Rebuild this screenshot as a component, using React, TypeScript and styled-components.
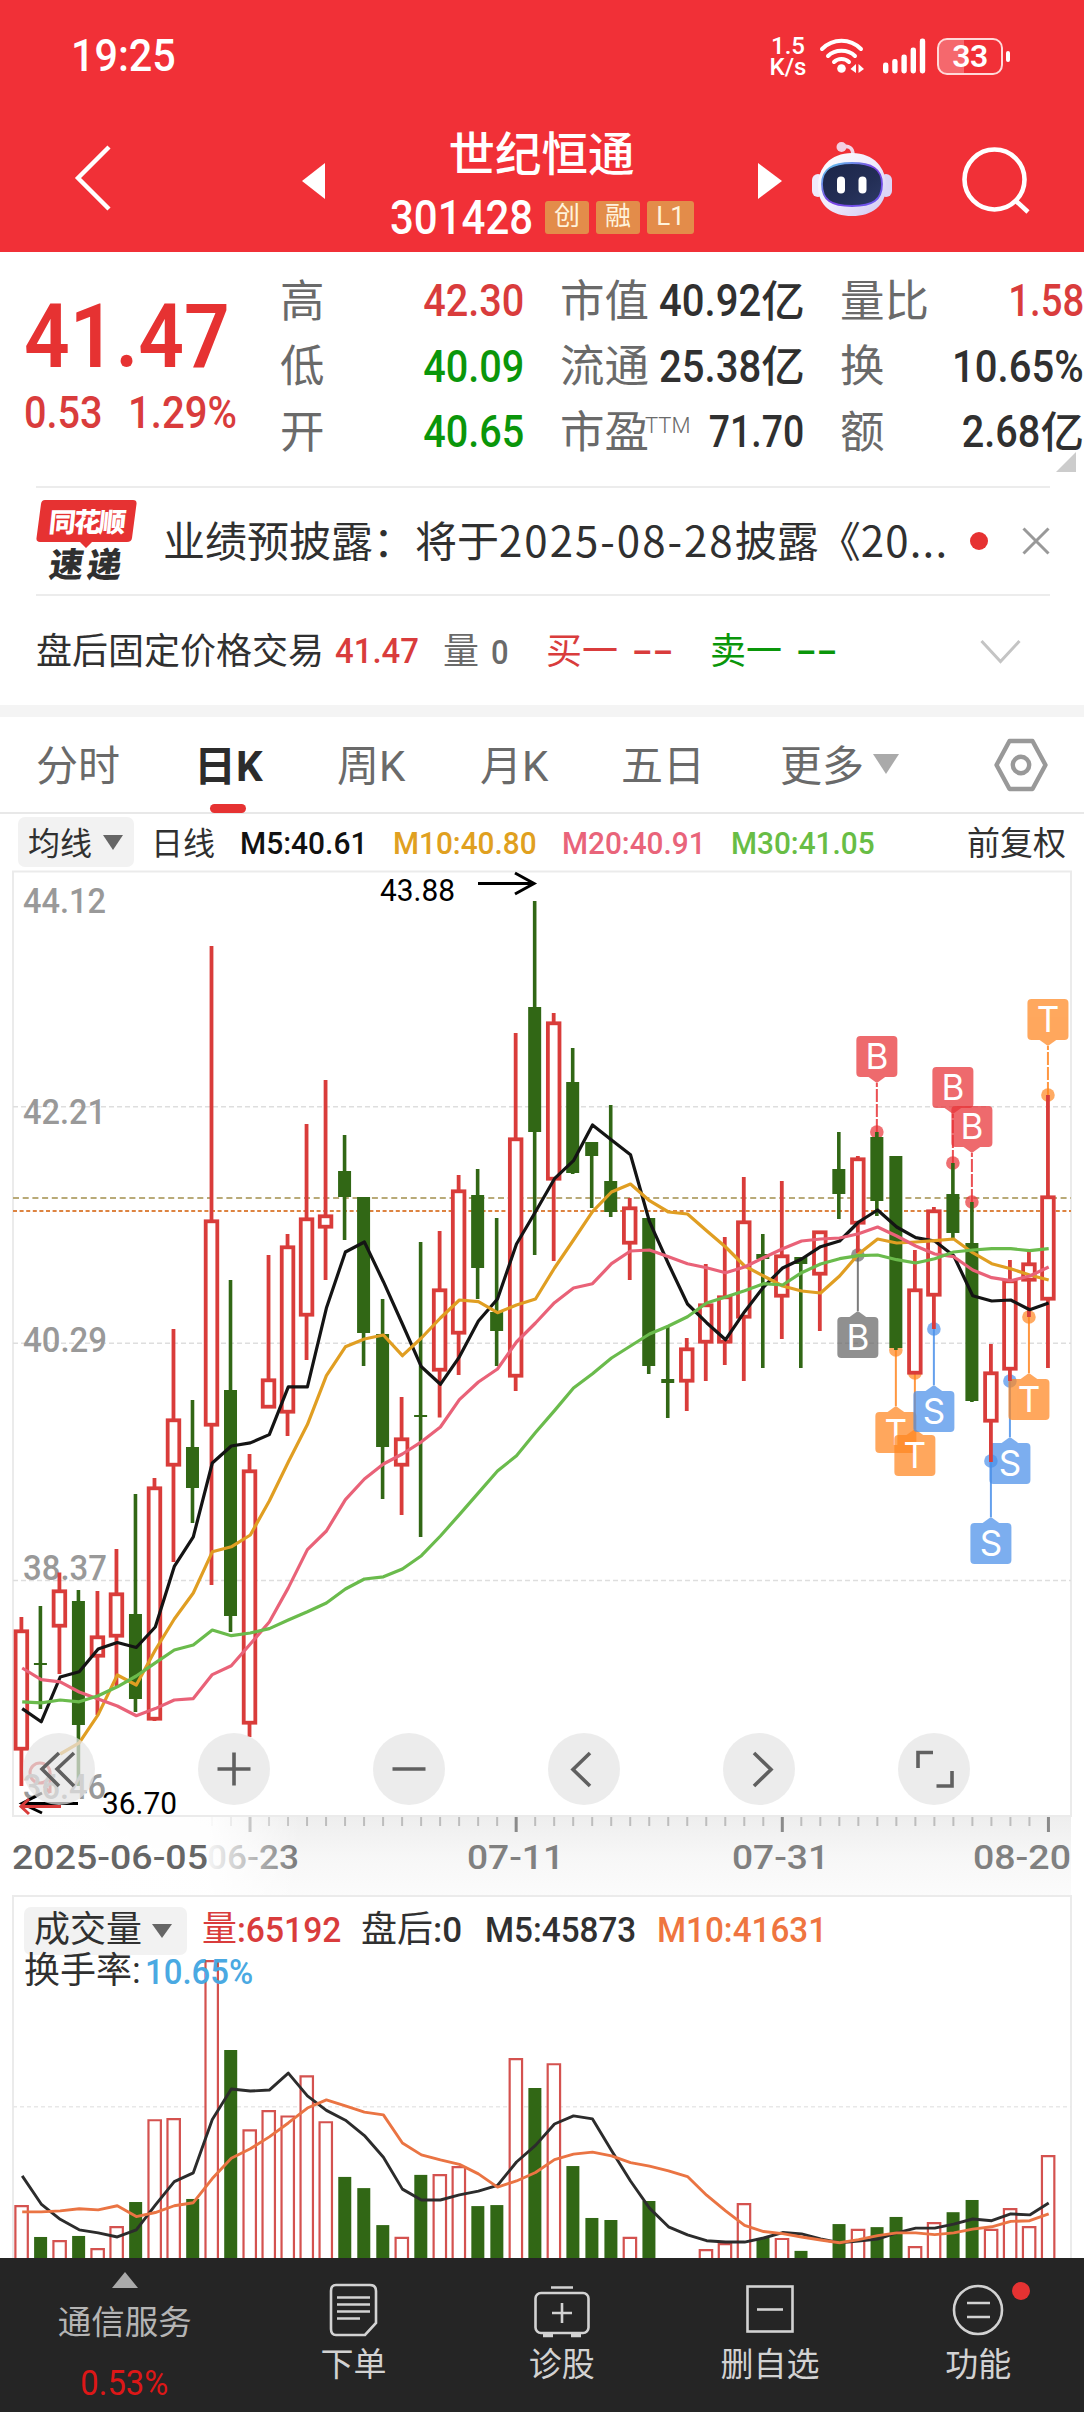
import React from "react";
import styled, { createGlobalStyle } from "styled-components";

const RED = "#e63232";
const GREEN = "#0a960a";
const INK = "#303030";
const GREY = "#6a6a6a";

const Global = createGlobalStyle`
  * { box-sizing: border-box; }
  html, body { margin: 0; padding: 0; background: #fff; }
  body {
    width: 1084px;
    font-family: Roboto, "Noto Sans CJK SC", sans-serif;
    color: ${INK};
    overflow: hidden;
  }
  svg { display: block; flex: none; overflow: visible; }
`;

const Page = styled.main`
  width: 1084px;
  height: 2412px;
  display: flex;
  flex-direction: column;
  overflow: hidden;
  background: #fff;
`;

/* Condensed numerals */
const Num = styled.span<{ $s: number; $x?: number; $c?: string; $w?: number; $o?: string }>`
  display: inline-block;
  flex: none;
  white-space: nowrap;
  font-size: ${(p) => p.$s}px;
  font-weight: ${(p) => p.$w ?? 500};
  color: ${(p) => p.$c ?? "inherit"};
  transform: scaleX(${(p) => p.$x ?? 0.91});
  transform-origin: ${(p) => p.$o ?? "left"} center;
`;

/* ---------- header ---------- */
const Header = styled.header`
  height: 252px;
  flex: none;
  background: #f13037;
  color: #fff;
`;
const StatusBar = styled.div`
  height: 112px;
  padding: 1px 74px 0 71px;
  display: flex;
  align-items: center;
  justify-content: space-between;
`;
const StatusIcons = styled.div`
  display: flex;
  align-items: center;
  margin-top: -1px;
`;
const Speed = styled.div`
  width: 48px;
  padding-top: 2px;
  font-size: 24px;
  line-height: 21px;
  font-weight: 500;
  text-align: center;
  white-space: pre;
  margin-right: 7px;
`;
const Battery = styled.div`
  width: 66px;
  height: 37px;
  border: 2.5px solid #ffd9d9;
  border-radius: 10px;
  margin-left: 11px;
  display: flex;
  align-items: center;
  justify-content: center;
  font-size: 32px;
  font-weight: 600;
  letter-spacing: -0.5px;
  background: linear-gradient(90deg, #f5686d 0 40%, transparent 40%);
`;
const BatteryNub = styled.div`
  width: 4px;
  height: 11px;
  margin-left: 3px;
  border-radius: 2px;
  background: #fff;
`;
const NavBar = styled.div`
  height: 140px;
  display: flex;
  align-items: flex-start;
`;
const NavSlot = styled.div<{ $l: number; $t: number }>`
  margin: ${(p) => p.$t}px 0 0 ${(p) => p.$l}px;
`;
const TitleBlock = styled.div`
  width: 433px;
  padding-top: 20px;
  display: flex;
  flex-direction: column;
  align-items: center;
`;
const StockName = styled.h1`
  margin: 0 2px 0 0;
  height: 50px;
  line-height: 46px;
  font-size: 46.5px;
  font-weight: 500;
`;
const CodeRow = styled.div`
  height: 34px;
  margin: 18px 1px 0 0;
  display: flex;
  align-items: center;
  gap: 7px;
`;
const CodeCell = styled.div`
  width: 148px;
  height: 34px;
  display: flex;
  align-items: center;
  line-height: 34px;
  padding-top: 2px;
`;
const Tag = styled.span<{ $w?: number }>`
  width: ${(p) => p.$w ?? 44}px;
  height: 33px;
  line-height: 31px;
  border-radius: 3px;
  background: #e38c4a;
  color: #fff3dc;
  text-align: center;
  font-size: 26px;
`;

/* ---------- quote ---------- */
const Quote = styled.section`
  height: 234px;
  flex: none;
  padding-top: 17px;
  display: flex;
  position: relative;
`;
const PriceCol = styled.div`
  width: 280px;
  padding-left: 24px;
`;
const Price = styled.div`
  height: 107px;
  padding-top: 15px;
  line-height: 106px;
`;
const Change = styled.div`
  display: flex;
  height: 74px;
  line-height: 75px;
  & > div { width: 104px; }
`;
const Stats = styled.div`
  display: grid;
  grid-template-columns: repeat(3, 244px);
  grid-auto-rows: 65.5px;
  column-gap: 36px;
`;
const Stat = styled.div`
  display: flex;
  align-items: center;
  line-height: 65px;
  font-size: 44px;
`;
const StatLabel = styled.span`
  flex: none;
  white-space: nowrap;
  display: flex;
  color: ${GREY};
  font-size: 44.5px;
  padding-top: 1px;
`;
const Sup = styled.span`
  font-size: 22px;
  line-height: 49px;
  font-weight: 300;
  margin-left: -4px;
`;
const StatValue = styled.span<{ $c?: string }>`
  margin-left: auto;
  color: ${(p) => p.$c ?? INK};
  display: flex;
  align-items: center;
`;
const Unit = styled.span`
  font-size: 43.5px;
  font-weight: 500;
  padding-top: 1px;
`;
const Corner = styled.i`
  position: absolute;
  right: 8px;
  bottom: 14px;
  border-bottom: 20px solid #ccc;
  border-left: 20px solid transparent;
`;

/* ---------- notice ---------- */
const Notice = styled.section`
  height: 110px;
  flex: none;
  margin: 0 34px 0 36px;
  border-top: 2px solid #ececec;
  border-bottom: 2px solid #ececec;
  display: flex;
  align-items: center;
`;
const Logo = styled.div`
  width: 101px;
  height: 82px;
`;
const NoticeText = styled.div`
  width: 791px;
  margin: -5px 0 0 26px;
  font-family: "Noto Sans CJK SC", sans-serif;
  font-size: 42px;
  line-height: 60px;
  white-space: nowrap;
`;
const Spaced = styled.span<{ $ls: number }>`
  letter-spacing: ${(p) => p.$ls}px;
`;
const Dot = styled.i`
  width: 18px;
  height: 18px;
  border-radius: 50%;
  background: ${RED};
  margin: 0 auto 0 16px;
`;

/* ---------- after hours ---------- */
const After = styled.section`
  height: 109px;
  flex: none;
  display: grid;
  grid-template-columns: 299px 108px 48px 55px 86px 78px 86px 184px 1fr;
  padding: 3px 0 0 36px;
  align-items: center;
  font-size: 36px;
  line-height: 40px;
  white-space: nowrap;
`;
const AfterText = styled.span<{ $c?: string }>`
  color: ${(p) => p.$c ?? INK};
  margin-top: -1px;
`;

/* ---------- tabs ---------- */
const Tabs = styled.nav`
  height: 109px;
  flex: none;
  border-top: 12px solid #f4f4f4;
  border-bottom: 2px solid #e8e8e8;
  padding-left: 36px;
  display: grid;
  grid-template-columns: 158px 143px 143px 141px 159px 214px 1fr;
  align-items: center;
`;
const Tab = styled.div<{ $on?: boolean }>`
  position: relative;
  display: flex;
  align-items: center;
  height: 95px;
  padding-bottom: 5px;
  font-size: 42px;
  color: ${(p) => (p.$on ? "#2c2c2c" : GREY)};
  font-weight: ${(p) => (p.$on ? 700 : 400)};
  &::after {
    content: "";
    display: ${(p) => (p.$on ? "block" : "none")};
    position: absolute;
    left: 16px;
    bottom: -1px;
    width: 36px;
    height: 9px;
    border-radius: 5px;
    background: ${RED};
  }
`;
const Caret = styled.i<{ $w: number; $h: number; $c: string; $l: number; $up?: boolean; $t?: number }>`
  width: 0;
  height: 0;
  margin-left: ${(p) => p.$l}px;
  margin-top: ${(p) => p.$t ?? 0}px;
  border-left: ${(p) => p.$w / 2}px solid transparent;
  border-right: ${(p) => p.$w / 2}px solid transparent;
  ${(p) => (p.$up ? "border-bottom" : "border-top")}: ${(p) => p.$h}px solid ${(p) => p.$c};
`;

/* ---------- indicators ---------- */
const MaRow = styled.div`
  height: 56px;
  flex: none;
  padding-left: 18px;
  display: grid;
  grid-template-columns: 133px 89px 153px 169px 169px 236px 1fr;
  align-items: center;
  white-space: nowrap;
`;
const MaNum = styled(Num)`
  margin-top: 2px;
`;
const Picker = styled.div<{ $w: number; $h: number }>`
  width: ${(p) => p.$w}px;
  height: ${(p) => p.$h}px;
  border-radius: 7px;
  background: #f2f2f2;
  padding-left: 10px;
  display: flex;
  align-items: center;
`;
const Zh = styled.span<{ $s: number; $c?: string; $t?: number }>`
  font-size: ${(p) => p.$s}px;
  color: ${(p) => p.$c ?? INK};
  margin-top: ${(p) => p.$t ?? -3}px;
  white-space: nowrap;
`;

/* ---------- charts ---------- */
const ChartBox = styled.section`
  position: relative;
  height: 947px;
  flex: none;
`;
const Tools = styled.div`
  position: absolute;
  left: 23px;
  bottom: 12px;
  display: flex;
  gap: 103px;
`;
const Tool = styled.button`
  width: 72px;
  height: 72px;
  padding: 0;
  border: 0;
  border-radius: 50%;
  background: rgba(229, 229, 229, 0.72);
  display: flex;
  align-items: center;
  justify-content: center;
`;
const Axis = styled.div`
  height: 78px;
  flex: none;
`;
const VolumeBox = styled.section`
  position: relative;
  height: 363px;
  flex: none;
`;
const VolLegend = styled.div`
  position: absolute;
  left: 24px;
  top: 12px;
`;
const VolRow = styled.div<{ $cols: string; $h: number }>`
  display: grid;
  grid-template-columns: ${(p) => p.$cols};
  height: ${(p) => p.$h}px;
  align-items: center;
  white-space: nowrap;
  line-height: ${(p) => p.$h}px;
`;
const Pair = styled.div`
  display: flex;
  align-items: center;
`;

/* ---------- bottom bar ---------- */
const Bottom = styled.footer`
  height: 154px;
  flex: none;
  background: #252525;
  color: #d2d2d2;
  display: grid;
  grid-template-columns: 249.5px repeat(4, 208.2px);
`;
const Sector = styled.div`
  display: flex;
  flex-direction: column;
  align-items: center;
  padding-top: 14px;
  font-size: 33.5px;
  line-height: 40px;
  color: #b4b4b4;
`;
const SectorName = styled.div`
  margin-top: 15px;
  height: 46px;
`;
const SectorPct = styled.div`
  margin-top: 14px;
`;
const Action = styled.div`
  position: relative;
  display: flex;
  flex-direction: column;
  align-items: center;
  padding-top: 22px;
  font-size: 33px;
  line-height: 40px;
`;
const ActionLabel = styled.div`
  margin-top: 5px;
`;
const Badge = styled.i`
  position: absolute;
  left: 138px;
  top: 24px;
  width: 18px;
  height: 18px;
  border-radius: 50%;
  background: ${RED};
`;

/* ---------- data ---------- */
const X0 = 21.4;
const STEP = 19.01;
const cx = (i: number) => X0 + STEP * i;

type Candle = [up: 0 | 1, high: number, top: number, bottom: number, low: number];
const candles: Candle[] = [
  [1, 1617, 1631, 1749, 1786], [0, 1606, 1663, 1665, 1709], [1, 1572.5, 1591, 1626, 1674],
  [0, 1590, 1601, 1725, 1786], [1, 1591, 1637, 1656, 1715], [1, 1549, 1594, 1636, 1686],
  [0, 1494, 1614, 1699, 1712], [1, 1478, 1488, 1719, 1721], [1, 1329, 1420, 1465, 1562],
  [0, 1400, 1447, 1488, 1523], [1, 946, 1221, 1425, 1585], [0, 1280, 1390, 1616, 1632],
  [1, 1454, 1471, 1723, 1737], [1, 1255, 1380, 1407, 1407], [1, 1234, 1247, 1412, 1436],
  [1, 1124, 1219, 1315, 1360], [1, 1080, 1216, 1227, 1280], [0, 1135, 1171, 1197, 1240],
  [0, 1197, 1197, 1333, 1366], [0, 1299, 1334, 1447, 1499], [1, 1397, 1439, 1465, 1515],
  [0, 1242, 1415, 1417, 1537], [1, 1231, 1290, 1370, 1417.5], [1, 1175, 1191, 1333, 1375],
  [0, 1169, 1195, 1268, 1299], [0, 1218, 1312, 1331, 1366], [1, 1033, 1139, 1376, 1391],
  [0, 901, 1007, 1132, 1255], [1, 1013, 1023, 1179, 1261], [0, 1048, 1082, 1173, 1174],
  [0, 1142, 1142, 1156, 1208], [0, 1105, 1181, 1212, 1217], [1, 1198, 1208, 1243, 1280],
  [0, 1218, 1218, 1366, 1374], [0, 1326, 1379, 1383, 1418], [1, 1338, 1349, 1381, 1411],
  [1, 1264, 1305, 1342, 1381], [1, 1237, 1297, 1342, 1365], [1, 1177, 1222, 1317, 1381],
  [0, 1234, 1254, 1259, 1368], [1, 1181, 1256, 1296, 1339], [0, 1257, 1257, 1264, 1368],
  [1, 1232, 1232, 1274, 1331], [0, 1132, 1169, 1194, 1219], [1, 1156, 1159, 1223, 1253],
  [0, 1132, 1137, 1201, 1216], [0, 1156, 1156, 1348, 1350], [1, 1250, 1290, 1373, 1373],
  [1, 1207, 1211, 1295, 1329], [0, 1163, 1194, 1233, 1238], [0, 1202, 1243, 1401, 1402],
  [1, 1344, 1373, 1421, 1462], [1, 1260, 1281, 1369, 1381], [1, 1250, 1264, 1280, 1317],
  [1, 1095, 1197, 1299, 1368],
];

const ma5 = [1708.6, 1721.8, 1677, 1671.8, 1649, 1642.5, 1647.5, 1627, 1566.4, 1536.8, 1463, 1446, 1442.9, 1434.6, 1386.8, 1386.8, 1308, 1252, 1242, 1281.7, 1324, 1366.8, 1384.3, 1356.8, 1321, 1299, 1244, 1211.7, 1178.7, 1160.7, 1125, 1140, 1154.7, 1221.7, 1264, 1304, 1322.7, 1339.7, 1311.7, 1287, 1268, 1259, 1246.7, 1241, 1222, 1210, 1227, 1237.7, 1241, 1255.7, 1295.7, 1301, 1300, 1309.7, 1303];
const ma10 = [1754, 1742.9, 1714.6, 1675, 1685, 1650, 1619, 1593, 1551.8, 1546.8, 1535, 1501, 1462, 1424.6, 1375.7, 1346.8, 1339, 1335, 1355.7, 1338, 1318, 1300, 1301.7, 1312.7, 1305, 1299, 1268, 1240, 1211.7, 1192, 1184, 1200.7, 1212, 1214, 1230.7, 1247, 1266, 1276, 1286, 1291, 1293, 1276, 1254, 1239, 1243, 1242, 1240.7, 1239, 1252.7, 1263.7, 1268.7, 1275, 1280];
const ma20 = [1668, 1679.6, 1681.8, 1692, 1699, 1706, 1715.7, 1708.6, 1700, 1698.6, 1674.6, 1665.7, 1644, 1622, 1587.9, 1549.6, 1531, 1499.6, 1479, 1464, 1454, 1441.8, 1427, 1399.6, 1382, 1369, 1342, 1323, 1302.7, 1288, 1283.7, 1263.7, 1251, 1250, 1256.7, 1263.7, 1267.7, 1272.7, 1267, 1257.7, 1248.7, 1241, 1239, 1238, 1233.7, 1227, 1236, 1246, 1254, 1256.7, 1270, 1277.7, 1280.7, 1276, 1267];
const ma30 = [1701.8, 1702.9, 1700, 1701.8, 1695.7, 1686.8, 1676, 1662.9, 1650, 1645, 1630, 1635.7, 1633, 1628.6, 1620, 1611.8, 1603, 1589, 1579, 1576.8, 1569, 1555.7, 1536, 1514.6, 1492.9, 1471, 1455.7, 1432.5, 1410.6, 1388, 1373.7, 1358, 1346, 1334, 1326, 1316.7, 1303, 1297, 1290.7, 1283.7, 1285, 1272.7, 1264, 1258.7, 1255.7, 1255, 1259.7, 1263, 1258.7, 1252, 1250, 1248.7, 1248.7, 1250.7, 1248.7];

const path = (ys: number[], from = 0) => ys.map((y, k) => `${(cx(k + from) + 0.8).toFixed(1)},${y}`).join(" ");

type Mark = { i: number; y: number; t: string; c: string; up?: boolean };
const marks: Mark[] = [
  { i: 45, y: 1132, t: "B", c: "#e83236", up: true },
  { i: 49, y: 1163, t: "B", c: "#e83236", up: true },
  { i: 50, y: 1202, t: "B", c: "#e83236", up: true },
  { i: 54, y: 1095, t: "T", c: "#ff8620", up: true },
  { i: 44, y: 1255, t: "B", c: "#666666" },
  { i: 46, y: 1350, t: "T", c: "#ff8620" },
  { i: 47, y: 1373, t: "T", c: "#ff8620" },
  { i: 48, y: 1329, t: "S", c: "#4a90ea" },
  { i: 51, y: 1461, t: "S", c: "#4a90ea" },
  { i: 52, y: 1381, t: "S", c: "#4a90ea" },
  { i: 53, y: 1317, t: "T", c: "#ff8620" },
];

const volTops = [958, 1052, 1061, 1049, 1085, 1020, 949, 705, 702, 940, 236, 501, 735, 678, 694, 576, 711, 875, 908, 1017, 1052, 869, 867, 843, 961, 958, 525, 613, 540, 843, 996, 1002, 1052, 946, 0, 0, 1088, 1070, 952, 1055, 1055, 1093, 0, 1014, 1028, 1023, 993, 1079, 1008, 979, 943, 1028, 967, 1020, 811];
const volMa5 = [872, 955, 1000, 1031, 1040, 1052, 1031, 958, 889, 863, 706, 616, 622, 619, 569, 636, 679, 708, 753, 817, 911, 943, 943, 928, 917, 900, 831, 782, 719, 695, 704, 797, 887, 967, 1022, 1046, 1063, 1067, 1067, 1055, 1039, 1043, 1058, 1069, 1064, 1058, 1040, 1026, 1026, 1014, 999, 1004, 984, 987, 952];
const volMa10 = [978, 978, 975, 969, 972, 960, 992, 980, 960, 951, 880, 820, 792, 757, 716, 672, 648, 666, 684, 692, 775, 810, 825, 838, 866, 905, 887, 862, 824, 808, 802, 813, 833, 843, 857, 874, 929, 975, 1018, 1036, 1042, 1052, 1061, 1069, 1060, 1048, 1040, 1040, 1045, 1040, 1029, 1022, 1006, 1004, 984];
const vy = (v: number) => 1880 + v / 2.947;

const UP = "#d93c3a";
const DOWN = "#316715";

const Fit = ({ x, w, y, s, c, wt = 500, children }: { x: number; w: number; y: number; s: number; c: string; wt?: number; children: string }) => (
  <text x={x} y={y} fontSize={s} fill={c} fontWeight={wt} fontFamily="Roboto, sans-serif" textLength={w} lengthAdjust="spacingAndGlyphs">
    {children}
  </text>
);

const CandleShape = ({ i, d }: { i: number; d: Candle }) => {
  const [up, h, t, b, l] = d;
  const x = cx(i);
  if (!up)
    return (
      <g fill={DOWN}>
        <rect x={x - 1.8} y={h} width={3.6} height={l - h} />
        <rect x={x - 6.5} y={t} width={13} height={b - t} />
      </g>
    );
  return (
    <g>
      <rect x={x - 1.9} y={h} width={3.8} height={Math.max(0, t - h)} fill={UP} />
      <rect x={x - 1.9} y={b} width={3.8} height={Math.max(0, l - b)} fill={UP} />
      <rect x={x - 5.8} y={t + 0.3} width={11.6} height={b - t - 0.6} fill="#fff" stroke={UP} strokeWidth={3.8} />
    </g>
  );
};

const MarkShape = ({ m }: { m: Mark }) => {
  const x = cx(m.i);
  const top = m.up ? m.y - 96 : m.y + 62;
  const tip = m.up ? m.y - 49 : m.y + 56;
  const base = m.up ? tip - 6.5 : tip + 6.5;
  return (
    <g>
      <line x1={x} x2={x} y1={m.y} y2={tip} stroke={m.c} strokeWidth={2} opacity={0.85} strokeDasharray={m.up ? "13 2" : undefined} />
      <circle cx={x} cy={m.y} r={6.8} fill={m.c} opacity={0.7} />
      <g fill={m.c} opacity={0.72}>
        <rect x={x - 20.5} y={top} width={41} height={41} rx={4} />
        <path d={`M${x - 9} ${base}L${x} ${tip}L${x + 9} ${base}Z`} />
      </g>
      <text x={x} y={top + 33} textAnchor="middle" fontSize={35} fill="#fff" fontFamily="Inter, sans-serif">
        {m.t}
      </text>
    </g>
  );
};

const PriceChart = () => (
  <svg width={1084} height={947} viewBox="0 870 1084 947">
    <path d="M13 1816V871.5H1071V1816Z" fill="none" stroke="#ebebeb" strokeWidth={2} />
    {[1106.7, 1343.3, 1580.5].map((y) => (
      <line key={y} x1={13} x2={1071} y1={y} y2={y} stroke="#dedede" strokeWidth={1.4} strokeDasharray="5 3" />
    ))}
    <line x1={13} x2={1071} y1={1198} y2={1198} stroke="#b9aa78" strokeWidth={2} strokeDasharray="6 3.7" />
    <line x1={13} x2={1071} y1={1211} y2={1211} stroke="#dd8340" strokeWidth={2} strokeDasharray="4 2.6" />
    <Fit x={23} w={83} y={913} s={35} c="#999">44.12</Fit>
    <Fit x={23} w={83} y={1124} s={35} c="#999">42.21</Fit>
    <Fit x={23} w={84} y={1352} s={35} c="#999">40.29</Fit>
    <Fit x={23} w={84} y={1580} s={35} c="#999">38.37</Fit>
    {marks.map((m) => (
      <MarkShape key={m.i} m={m} />
    ))}
    {candles.map((d, i) => (
      <CandleShape key={i} i={i} d={d} />
    ))}
    <g fill="none" strokeWidth={3.2} strokeLinejoin="round">
      <polyline points={path(ma5)} stroke="#141414" />
      <polyline points={path(ma10, 2)} stroke="#e09e22" />
      <polyline points={path(ma20)} stroke="#e96278" />
      <polyline points={path(ma30)} stroke="#6abb4c" />
    </g>
    <Fit x={380} w={75} y={901} s={31} c="#000" wt={400}>43.88</Fit>
    <path d="M478 883.5H534M515 873L534 883.5L515 894" fill="none" stroke="#000" strokeWidth={3} />
    <circle cx={40} cy={1773} r={10} fill="none" stroke={UP} strokeWidth={3} />
    <path d="M50 1773V1793M44 1786L50 1793" fill="none" stroke={UP} strokeWidth={3} />
    <Fit x={23} w={83} y={1798.5} s={35} c="#999">36.46</Fit>
    <path d="M78 1803.5H22M42 1793L22 1803.5L42 1813" fill="none" stroke="#000" strokeWidth={3} />
    <path d="M61 1806.5H21M29 1799L21 1806.5L29 1814" fill="none" stroke={UP} strokeWidth={3} />
    <Fit x={102} w={75} y={1813.5} s={31} c="#000" wt={400}>36.70</Fit>
  </svg>
);

const DateAxis = () => (
  <svg width={1084} height={78} viewBox="0 1817 1084 78">
    <defs>
      <linearGradient id="axis" x1="0" x2="0" y1="0" y2="1">
        <stop offset="0" stopColor="#eeeeee" />
        <stop offset="0.5" stopColor="#f7f7f7" />
        <stop offset="1" stopColor="#fbfbfb" />
      </linearGradient>
      <linearGradient id="fade" gradientUnits="userSpaceOnUse" x1="13" x2="300" y1="0" y2="0">
        <stop offset="0" stopColor="#fff" />
        <stop offset="0.68" stopColor="#fff" stopOpacity="0.93" />
        <stop offset="0.8" stopColor="#fff" stopOpacity="0.6" />
        <stop offset="1" stopColor="#fff" stopOpacity="0" />
      </linearGradient>
    </defs>
    <rect x={13} y={1817} width={1058} height={78} fill="url(#axis)" />
    {Array.from({ length: 45 }, (_, k) => k + 10).map((i) => {
      const major = (i - 12) % 14 === 0;
      return (
        <rect key={i} x={cx(i) - (major ? 1.5 : 1) + 0.5} y={1817} width={major ? 3 : 2} height={major ? 15 : 9} fill={major ? "#8a8a8a" : "#bdbdbd"} />
      );
    })}
    <Fit x={207} w={92} y={1869} s={34} c="#777">06-23</Fit>
    <rect x={13} y={1817} width={287} height={78} fill="url(#fade)" />
    <Fit x={12} w={196} y={1869} s={34} c="#666">2025-06-05</Fit>
    <Fit x={467} w={97} y={1869} s={34} c="#808080">07-11</Fit>
    <Fit x={732} w={97} y={1869} s={34} c="#808080">07-31</Fit>
    <Fit x={973} w={98} y={1869} s={34} c="#808080">08-20</Fit>
  </svg>
);

const VolumeChart = () => (
  <svg width={1084} height={363} viewBox="0 1895 1084 363">
    <path d="M13 2258V1896H1071V2258" fill="none" stroke="#ebebeb" strokeWidth={2} />
    <line x1={13} x2={1071} y1={2106.7} y2={2106.7} stroke="#e8e8e8" strokeWidth={1.5} strokeDasharray="4 3" />
    {volTops.map((v, i) => {
      if (!v) return null;
      const y = vy(v);
      return candles[i][0] ? (
        <path key={i} d={`M${cx(i) - 6} 2258V${y + 1}h12.4V2258`} fill="#fff" stroke="#d4524f" strokeWidth={2.2} />
      ) : (
        <rect key={i} x={cx(i) - 6.3} y={y} width={13} height={2258 - y} fill={DOWN} />
      );
    })}
    <g fill="none" strokeWidth={2.9} strokeLinejoin="round">
      <polyline points={path(volMa5.map(vy))} stroke="#2c2c2c" />
      <polyline points={path(volMa10.map(vy))} stroke="#ea7443" />
    </g>
  </svg>
);

const Wifi = () => (
  <svg width={46} height={36} viewBox="0 0 46 36" fill="none" stroke="#fff" strokeWidth={4} strokeLinecap="round">
    <path d="M3 11C14 0 31 0 42 11M9 18C16 11 29 11 36 18M15 24C19 20 26 20 30 24" />
    <circle cx={22.5} cy={30.5} r={4.3} fill="#fff" stroke="none" />
    <path d="M37 26V35L31.5 31ZM39.500 26V35L45 31Z" fill="#fff" stroke="none" />
  </svg>
);

const Signal = () => (
  <svg width={44} height={36} viewBox="0 0 44 36" fill="#fff">
    {[11, 14.500, 19, 26, 35].map((h, i) => (
      <rect key={i} x={1 + i * 9.2} y={35.5 - h} width={5.4} height={h} rx={2.4} />
    ))}
  </svg>
);

const Robot = () => (
  <svg width={82} height={76} viewBox="0 0 82 76">
    <defs>
      <linearGradient id="shell" x1="0" x2="1" y1="0" y2="1">
        <stop offset="0" stopColor="#fff" />
        <stop offset="0.5" stopColor="#f0ebfc" />
        <stop offset="1" stopColor="#cfc6f2" />
      </linearGradient>
      <linearGradient id="rim" x1="0" x2="1" y1="0" y2="1">
        <stop offset="0" stopColor="#5fd6f0" />
        <stop offset="0.5" stopColor="#7a3fe0" />
        <stop offset="1" stopColor="#6a5cf0" />
      </linearGradient>
      <linearGradient id="visor" x1="0" x2="1" y1="0" y2="1">
        <stop offset="0" stopColor="#1b2549" />
        <stop offset="0.6" stopColor="#232e55" />
        <stop offset="1" stopColor="#2d3a66" />
      </linearGradient>
    </defs>
    <path d="M31 6C38 4 42 7 42 14" fill="none" stroke="#f3d5e6" strokeWidth={3.6} />
    <circle cx={30.500} cy={6} r={5} fill="#f3cfe2" />
    <rect x={1} y={33} width={12} height={23} rx={6} fill="#efeafb" />
    <rect x={69} y={33} width={12} height={23} rx={6} fill="#dcd5f6" />
    <path d="M41 12C63 12 75 27 75 45C75 65 61 75 41 75C21 75 7 65 7 45C7 27 19 12 41 12Z" fill="url(#shell)" />
    <path d="M41 22C61 22 71 28 71 43C71 59 62 65 41 65C20 65 11 59 11 43C11 28 21 22 41 22Z" fill="url(#visor)" stroke="url(#rim)" strokeWidth={1.8} />
    <rect x={26} y={35.500} width={8} height={17} rx={4} fill="#fff" />
    <rect x={47.500} y={35.500} width={8} height={17} rx={4} fill="#fff" />
  </svg>
);

const stats: { l: string; sup?: string; v: string; u?: string; c?: string; x?: number }[] = [
  { l: "高", v: "42.30", c: "#d93c3c" },
  { l: "市值", v: "40.92", u: "亿", x: 0.91 },
  { l: "量比", v: "1.58", c: "#d93c3c", x: 0.87 },
  { l: "低", v: "40.09", c: GREEN },
  { l: "流通", v: "25.38", u: "亿", x: 0.91 },
  { l: "换", v: "10.65%", x: 0.91 },
  { l: "开", v: "40.65", c: GREEN },
  { l: "市盈", sup: "TTM", v: "71.70", x: 0.85 },
  { l: "额", v: "2.68", u: "亿" },
];

const toolPaths = [
  "M36 20L19 36L36 53M51 20L34 36L51 53",
  "M19.500 36H52.500M36 19.500V52.500",
  "M19.500 36H52.500",
  "M42 20L25 36.500L42 53",
  "M31 20L48 36.500L31 53",
  "M20 35V19.500H35M54 38V53H38.500",
];

export default function App() {
  return (
    <Page>
      <Global />
      <Header>
        <StatusBar>
          <Num $s={43.5} $x={0.95}>19:25</Num>
          <StatusIcons>
            <Speed>{"1.5\nK/s"}</Speed>
            <Wifi />
            <NavSlot $l={17} $t={0}>
              <Signal />
            </NavSlot>
            <Battery>33</Battery>
            <BatteryNub />
          </StatusIcons>
        </StatusBar>
        <NavBar>
          <NavSlot $l={74} $t={33}>
            <svg width={37} height={66} viewBox="0 0 37 66" fill="none" stroke="#fff" strokeWidth={4.4}>
              <path d="M35 2L4 33L35 64" />
            </svg>
          </NavSlot>
          <NavSlot $l={191} $t={51}>
            <svg width={24} height={36} viewBox="0 0 24 36" fill="#fff">
              <path d="M23 0V36L0 18Z" />
            </svg>
          </NavSlot>
          <TitleBlock>
            <StockName>世纪恒通</StockName>
            <CodeRow>
              <CodeCell>
                <Num $s={48} $x={0.875}>301428</Num>
              </CodeCell>
              <Tag>创</Tag>
              <Tag>融</Tag>
              <Tag $w={47}>L1</Tag>
            </CodeRow>
          </TitleBlock>
          <NavSlot $l={-1} $t={51}>
            <svg width={24} height={36} viewBox="0 0 24 36" fill="#fff">
              <path d="M0 0V36L24 18Z" />
            </svg>
          </NavSlot>
          <NavSlot $l={29} $t={29}>
            <Robot />
          </NavSlot>
          <NavSlot $l={69} $t={35}>
            <svg width={68} height={68} viewBox="0 0 68 68" fill="none" stroke="#fff" strokeWidth={4.6}>
              <circle cx={32.500} cy={32.500} r={30} />
              <path d="M54 54L66 65" />
            </svg>
          </NavSlot>
        </NavBar>
      </Header>

      <Quote>
        <PriceCol>
          <Price>
            <Num $s={88.5} $x={0.905} $c={RED} $w={600}>41.47</Num>
          </Price>
          <Change>
            <div>
              <Num $s={44} $x={0.9} $c="#d93c3c">0.53</Num>
            </div>
            <div>
              <Num $s={44} $x={0.91} $c="#d93c3c">1.29%</Num>
            </div>
          </Change>
        </PriceCol>
        <Stats>
          {stats.map((s) => (
            <Stat key={s.l}>
              <StatLabel>
                {s.l}
                {s.sup && <Sup>{s.sup}</Sup>}
              </StatLabel>
              <StatValue $c={s.c}>
                <Num $s={44} $o="right" $x={s.x ?? 0.9}>{s.v}</Num>
                {s.u && <Unit>{s.u}</Unit>}
              </StatValue>
            </Stat>
          ))}
        </Stats>
        <Corner />
      </Quote>

      <Notice>
        <Logo>
          <svg width={101} height={82} viewBox="0 0 101 82">
            <path d="M9 0H97Q101 0 100.500 4L96 38Q95.500 42 91 42H56L50 48L44 42H4Q0 42 0.500 38L5 4Q5.500 0 9 0Z" fill={RED} />
            <text transform="translate(12 32) skewX(-6)" fontSize={27} fontWeight={900} fill="#fff" textLength={77} fontFamily="Noto Sans CJK SC, sans-serif">同花顺</text>
            <text transform="translate(12 77) skewX(-8)" fontSize={34} fontWeight={900} fill="#303030" fontFamily="Noto Sans CJK SC, sans-serif" textLength={72}>速递</text>
          </svg>
        </Logo>
        <NoticeText>
          业绩预披露：将于<Spaced $ls={2}>2025-08-28</Spaced>披露《<Spaced $ls={1.2}>20...</Spaced>
        </NoticeText>
        <Dot />
        <svg width={28} height={28} viewBox="0 0 28 28" stroke="#999" strokeWidth={3}>
          <path d="M1.500 1.500L26.500 26.500M26.500 1.500L1.500 26.500" />
        </svg>
      </Notice>

      <After>
        <AfterText>盘后固定价格交易</AfterText>
        <Num $s={35} $x={0.94} $c="#d93c3c">41.47</Num>
        <AfterText $c={GREY}>量</AfterText>
        <Num $s={34} $c={GREY}>0</Num>
        <AfterText $c="#d93c3c">买一</AfterText>
        <Num $s={36} $x={1.7} $c="#d93c3c">--</Num>
        <AfterText $c={GREEN}>卖一</AfterText>
        <Num $s={36} $x={1.7} $c={GREEN}>--</Num>
        <svg width={41} height={26} viewBox="0 0 41 26" fill="none" stroke="#c4c4c4" strokeWidth={3}>
          <path d="M1.500 2L20.500 22.500L39.500 2" />
        </svg>
      </After>

      <Tabs>
        <Tab>分时</Tab>
        <Tab $on>日K</Tab>
        <Tab>周K</Tab>
        <Tab>月K</Tab>
        <Tab>五日</Tab>
        <Tab>
          更多
          <Caret $w={26} $h={20} $c="#aaa" $l={9} $t={3} />
        </Tab>
        <svg width={54} height={54} viewBox="0 0 54 54" fill="none" stroke="#999" strokeWidth={4.4} strokeLinejoin="round">
          <path d="M15.500 3H38.500L51.500 27L38.500 51H15.500L2.500 27Z" />
          <circle cx={27} cy={27} r={8.200} />
        </svg>
      </Tabs>

      <MaRow>
        <Picker $w={116} $h={50}>
          <Zh $s={32}>均线</Zh>
          <Caret $w={20} $h={15} $c="#666" $l={11} />
        </Picker>
        <Zh $s={32}>日线</Zh>
        <MaNum $s={32} $x={0.935} $c="#111">M5:40.61</MaNum>
        <MaNum $s={32} $x={0.93} $c="#e0a020">M10:40.80</MaNum>
        <MaNum $s={32} $x={0.93} $c="#e9647a">M20:40.91</MaNum>
        <MaNum $s={32} $x={0.93} $c="#68bd45">M30:41.05</MaNum>
        <Zh $s={33} $t={-2}>前复权</Zh>
      </MaRow>

      <ChartBox>
        <PriceChart />
        <Tools>
          {toolPaths.map((d) => (
            <Tool key={d}>
              <svg width={72} height={72} viewBox="0 0 72 72" fill="none" stroke="#606060" strokeWidth={3.600}>
                <path d={d} />
              </svg>
            </Tool>
          ))}
        </Tools>
      </ChartBox>

      <Axis>
        <DateAxis />
      </Axis>

      <VolumeBox>
        <VolumeChart />
        <VolLegend>
          <VolRow $cols="178px 159px 124px 172px 200px" $h={48}>
            <Picker $w={163} $h={48}>
              <Zh $s={36}>成交量</Zh>
              <Caret $w={21} $h={14} $c="#666" $l={10} />
            </Picker>
            <Pair>
              <Zh $s={35} $c="#d93c3c">量</Zh>
              <Num $s={35} $x={0.96} $c="#d93c3c">:65192</Num>
            </Pair>
            <Pair>
              <Zh $s={36}>盘后</Zh>
              <Num $s={35} $x={1}>:0</Num>
            </Pair>
            <Num $s={35} $x={0.95}>M5:45873</Num>
            <Num $s={35} $x={0.95} $c="#ef7540">M10:41631</Num>
          </VolRow>
          <VolRow $cols="121px 120px" $h={36}>
            <Zh $s={36} $t={-5}>换手率:</Zh>
            <Num $s={35} $x={0.94} $c="#4aa9e2">10.65%</Num>
          </VolRow>
        </VolLegend>
      </VolumeBox>

      <Bottom>
        <Sector>
          <Caret $w={27} $h={16} $c="#aaa" $l={0} $up />
          <SectorName>通信服务</SectorName>
          <SectorPct>
            <Num $s={34.5} $c="#dd1717" $w={400} $x={0.95} $o="center">0.53%</Num>
          </SectorPct>
        </Sector>
        <Action>
          <svg width={56} height={60} viewBox="0 0 56 60" fill="none" stroke="#d2d2d2" strokeWidth={2.600}>
            <path d="M10 5H44Q50 5 50 11V43L39 55H10Q5 55 5 49V11Q5 5 10 5Z" />
            <path d="M11 17.500H44M11 24.500H44M11 31.500H44M11 38.500H34" />
          </svg>
          <ActionLabel>下单</ActionLabel>
        </Action>
        <Action>
          <svg width={60} height={60} viewBox="0 0 60 60" fill="none" stroke="#d2d2d2" strokeWidth={2.600}>
            <rect x={3.500} y={13} width={53} height={40} rx={5.500} />
            <path d="M19 7.500H41M30 23V43M20 33H40" />
            <path d="M11 55.500H21M39 55.500H49" strokeWidth={3.600} />
          </svg>
          <ActionLabel>诊股</ActionLabel>
        </Action>
        <Action>
          <svg width={60} height={60} viewBox="0 0 60 60" fill="none" stroke="#d2d2d2" strokeWidth={2.600}>
            <rect x={7.500} y={6.500} width={45} height={45} />
            <path d="M17 29.500H43" />
          </svg>
          <ActionLabel>删自选</ActionLabel>
        </Action>
        <Action>
          <svg width={60} height={60} viewBox="0 0 60 60" fill="none" stroke="#d2d2d2" strokeWidth={2.600}>
            <circle cx={30} cy={30} r={24} />
            <path d="M19 23H42M19 37H42" />
          </svg>
          <Badge />
          <ActionLabel>功能</ActionLabel>
        </Action>
      </Bottom>
    </Page>
  );
}
